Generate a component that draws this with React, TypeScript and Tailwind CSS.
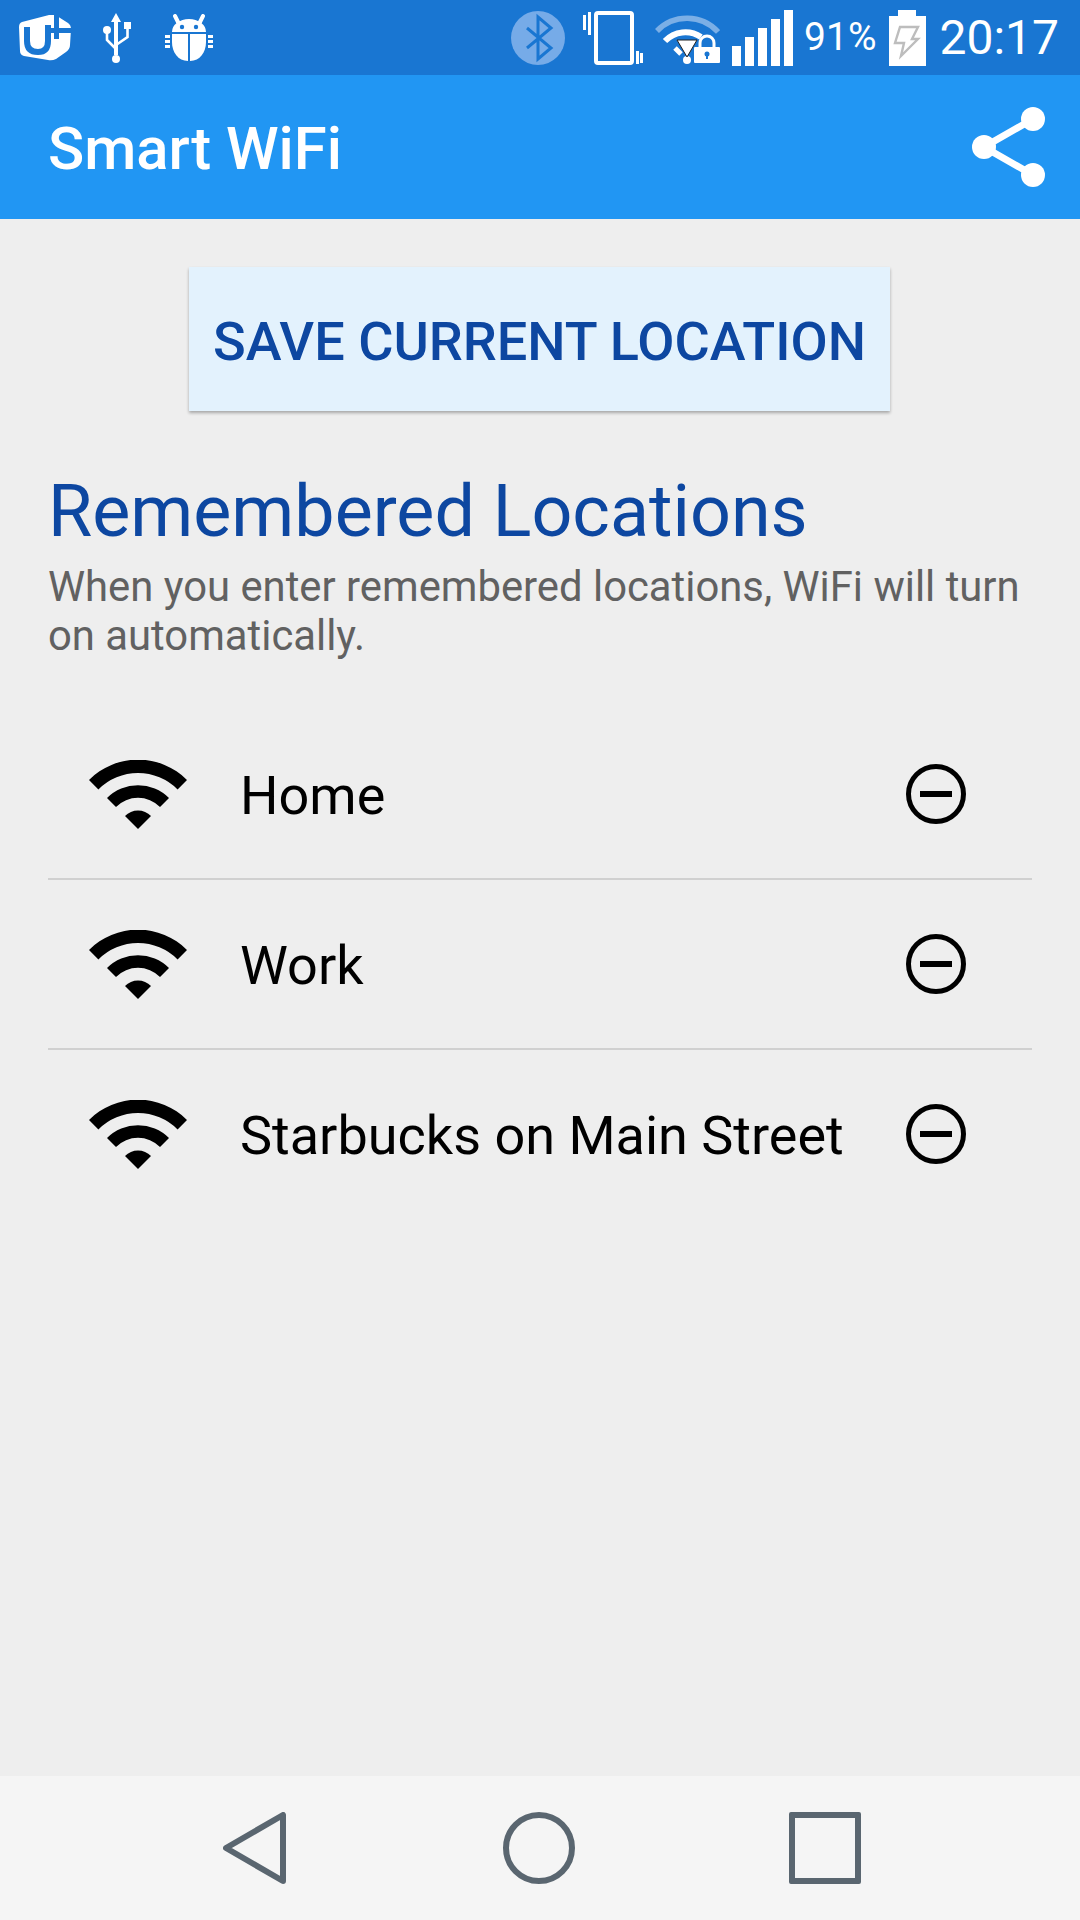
function WifiIcon() {
  return (
    <svg width="98" height="69" viewBox="0 0 98 69" className="shrink-0">
      <path d="M0 20 A69 69 0 0 1 98 20 L88.6 29.4 A56 56 0 0 0 9.4 29.4 Z" fill="#000" />
      <path d="M18 38 A44 44 0 0 1 80 38 L71 47 A31 31 0 0 0 27 47 Z" fill="#000" />
      <path d="M36 56 A18 18 0 0 1 62 56 L49 69 Z" fill="#000" />
    </svg>
  );
}

function RemoveIcon() {
  return (
    <svg width="60" height="60" viewBox="0 0 60 60" className="shrink-0">
      <circle cx="30" cy="30" r="27.5" fill="none" stroke="#000" strokeWidth="5" />
      <rect x="14" y="27" width="32" height="6" fill="#000" />
    </svg>
  );
}

function StatusBar() {
  return (
    <div className="h-[75px] shrink-0 bg-[#1976D2] flex items-center pl-[19px] pr-[21px] text-white">
      {/* carrier logo */}
      <svg width="53" height="46" viewBox="0 0 53 46">
        <path d="M3 7 L30 0 Q34 -1 38 1 L49 8 Q52 10 52 14 L51 30 Q51 34 47 37 L37 44 Q33 46 29 45 L5 41 Q1 40 1 36 L0 12 Q0 8 3 7 Z" fill="#fff" />
        <path d="M8 12 V26 Q8 37 19 37 Q29 37 29 26 V10" fill="none" stroke="#1976D2" strokeWidth="6" />
        <path d="M35 0 H40 V13 H53 V18 H40 V24 H35 V18 H32 V13 H35 Z" fill="#1976D2" />
      </svg>
      {/* usb */}
      <svg width="28" height="50" viewBox="0 0 28 50" className="ml-[31px]">
        <path d="M13 0 L18 9 H15 V42 H11 V9 H8 Z" fill="#fff" />
        <circle cx="13" cy="46" r="4" fill="#fff" />
        <circle cx="4" cy="17" r="4" fill="#fff" />
        <rect x="21" y="9" width="7" height="7" fill="#fff" />
        <path d="M4 18 V27 L13 36" fill="none" stroke="#fff" strokeWidth="2.6" />
        <path d="M24.5 15 V24 L13 32" fill="none" stroke="#fff" strokeWidth="2.6" />
      </svg>
      {/* debug bug */}
      <svg width="48" height="48" viewBox="0 0 48 48" className="ml-[34px]">
        <path d="M13 8 L10 2 M35 8 L38 2" stroke="#fff" strokeWidth="4" strokeLinecap="round" />
        <path d="M7 18 A17 13 0 0 1 41 18 Z" fill="#fff" />
        <circle cx="17" cy="13" r="2.2" fill="#1976D2" />
        <circle cx="31" cy="13" r="2.2" fill="#1976D2" />
        <path d="M7 20 H23 V47 C13 47 7 38 7 28 Z" fill="#fff" />
        <path d="M41 20 H25 V47 C35 47 41 38 41 28 Z" fill="#fff" />
        <path d="M0 21 H5 V24 H0 Z M0 26 H5 V29 H0 Z M0 31 H5 V34 H0 Z M43 21 H48 V24 H43 Z M43 26 H48 V29 H43 Z M43 31 H48 V34 H43 Z" fill="#fff" />
      </svg>

      <div className="ml-auto flex items-center">
        {/* bluetooth */}
        <svg width="54" height="54" viewBox="0 0 54 54">
          <circle cx="27" cy="27" r="27" fill="#76ABE8" />
          <path d="M16 17 L40 37 L27 48 V6 L40 17 L16 37" fill="none" stroke="#1976D2" strokeWidth="3" />
        </svg>
        {/* vibrate */}
        <svg width="60" height="54" viewBox="0 0 60 54" className="ml-[18px]">
          <rect x="13" y="2" width="36" height="50" rx="2" fill="none" stroke="#fff" strokeWidth="4" />
          <path d="M0 4 H3 V19 H0 Z M5 1 H8 V24 H5 Z M53 40 H56 V53 H53 Z M57 42 H60 V52 H57 Z" fill="#fff" />
        </svg>
        {/* wifi with lock */}
        <svg width="65" height="50" viewBox="0 0 65 50" className="ml-[12px] mt-[3px]">
          <path d="M2 17 A42 42 0 0 1 63 18" fill="none" stroke="#7BAFE6" strokeWidth="5.5" />
          <path d="M10 27 A28 28 0 0 1 46 23" fill="none" stroke="#fff" strokeWidth="6" />
          <path d="M20 34 L26 40" stroke="#fff" strokeWidth="5" />
          <circle cx="32" cy="46" r="4" fill="#fff" />
          <path d="M22 26 H42 L32 43 Z" fill="#fff" stroke="#222" strokeWidth="1" />
          <rect x="39" y="33" width="26" height="16" rx="1" fill="#fff" />
          <path d="M45 33 V29 A7 7 0 0 1 59 29 V33" fill="none" stroke="#fff" strokeWidth="3" />
          <circle cx="52" cy="40" r="2.5" fill="#1976D2" />
          <rect x="51" y="40" width="2" height="5" fill="#1976D2" />
        </svg>
        {/* signal */}
        <div className="ml-[12px] flex items-end gap-[4px] h-[56px]">
          <div className="w-[9px] h-[20px] bg-white" />
          <div className="w-[9px] h-[29px] bg-white" />
          <div className="w-[9px] h-[38px] bg-white" />
          <div className="w-[9px] h-[47px] bg-white" />
          <div className="w-[9px] h-[56px] bg-white" />
        </div>
        <span className="ml-[11px] text-[39px] leading-none">91%</span>
        {/* battery */}
        <svg width="37" height="56" viewBox="0 0 37 56" className="ml-[13px]">
          <rect x="9" y="0" width="18" height="7" fill="#fff" />
          <rect x="0" y="6" width="37" height="50" fill="#fff" />
          <path d="M11 17 H29 L23 29 H29 L12 46 L15 33 H6 Z" fill="none" stroke="#BDBDBD" strokeWidth="2.4" />
        </svg>
        <span className="ml-[13px] text-[48px] leading-none">20:17</span>
      </div>
    </div>
  );
}

function LocationRow({ name, last }: { name: string; last?: boolean }) {
  return (
    <div className={`h-[170px] flex items-center pl-[41px] pr-[66px] border-b-2 ${last ? 'border-transparent' : 'border-[#D0D0D0]'}`}>
      <WifiIcon />
      <span className="ml-[53px] mt-[3px] text-[54px] leading-none text-black">{name}</span>
      <div className="ml-auto">
        <RemoveIcon />
      </div>
    </div>
  );
}

export default function App() {
  return (
    <div className="w-[1080px] h-[1920px] flex flex-col bg-[#EEEEEE] overflow-hidden font-['Roboto',sans-serif]">
      <StatusBar />

      <div className="h-[144px] shrink-0 bg-[#2196F3] flex items-center justify-between pl-[48px] pr-[34px]">
        <span className="mt-[5px] text-[59.8px] leading-none font-medium text-white">Smart WiFi</span>
        <svg width="74" height="80" viewBox="0 0 74 80">
          <path d="M61 12 L12 40 L61 68" fill="none" stroke="#fff" strokeWidth="7" />
          <circle cx="61" cy="12" r="12" fill="#fff" />
          <circle cx="12" cy="40" r="12" fill="#fff" />
          <circle cx="61" cy="68" r="12" fill="#fff" />
        </svg>
      </div>

      <div className="flex-1 px-[48px]">
        <div className="mt-[48px] flex justify-center">
          <button className="w-[701px] h-[144px] ml-[-1px] pt-[5px] bg-[#E3F2FD] text-[54px] font-medium text-[#0D47A1] shadow-[0_2px_3px_rgba(0,0,0,0.3)]">
            SAVE CURRENT LOCATION
          </button>
        </div>

        <h1 className="mt-[61px] text-[71.8px] leading-[80px] text-[#0D47A1]">Remembered Locations</h1>
        <p className="mt-[10px] text-[41.8px] leading-[49px] text-[#616161]">
          When you enter remembered locations, WiFi will turn on automatically.
        </p>

        <div className="mt-[50px]">
          <LocationRow name="Home" />
          <LocationRow name="Work" />
          <LocationRow name="Starbucks on Main Street" last />
        </div>
      </div>

      <div className="h-[144px] shrink-0 bg-[#F5F5F5] flex items-center">
        <svg width="64" height="72" viewBox="0 0 64 72" className="ml-[223px]">
          <path d="M60 3 V69 L3 36 Z" fill="none" stroke="#5A6670" strokeWidth="6" strokeLinejoin="round" />
        </svg>
        <div className="ml-[216px] w-[72px] h-[72px] rounded-full border-[6px] border-[#5A6670]" />
        <div className="ml-[214px] w-[72px] h-[72px] rounded-[2px] border-[6px] border-[#5A6670]" />
      </div>
    </div>
  );
}
